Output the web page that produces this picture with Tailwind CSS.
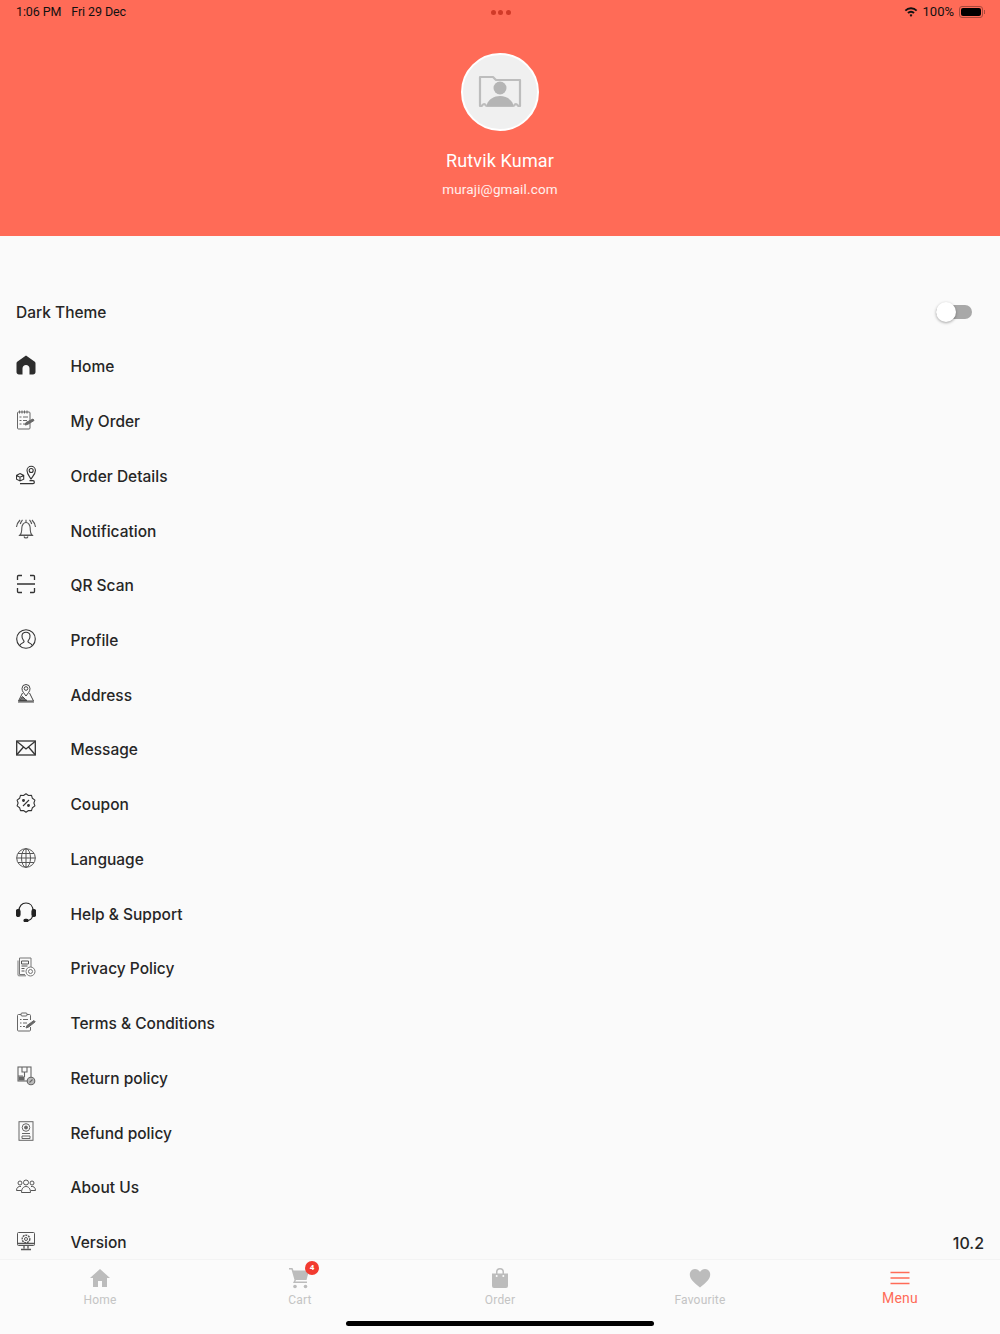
<!DOCTYPE html>
<html lang="en">
<head>
    <meta charset="UTF-8">
    <title>Menu</title>
    <script src="https://cdn.jsdelivr.net/npm/@tailwindcss/browser@4"></script>
</head>
<body class="bg-[#fafafa] font-['Inter',sans-serif] text-[#262626]">
<div class="w-[1000px] h-[1334px] flex flex-col overflow-hidden">

    <!-- Header -->
    <header class="h-[236px] shrink-0 bg-[#ff6b57] flex flex-col items-center">
        <div class="w-full h-6 shrink-0 grid grid-cols-3 items-center pl-4 pr-[15px] text-[12.5px] text-[#111] font-['Roboto',sans-serif]">
            <div class="flex gap-[10px] tracking-[-0.1px]"><span>1:06 PM</span><span>Fri 29 Dec</span></div>
            <div class="flex justify-center gap-[2.5px]">
                <span class="w-[5px] h-[5px] rounded-full bg-[#d03a28]"></span>
                <span class="w-[5px] h-[5px] rounded-full bg-[#d03a28]"></span>
                <span class="w-[5px] h-[5px] rounded-full bg-[#d03a28]"></span>
            </div>
            <div class="flex justify-end items-center gap-[5px] text-[13px]">
                <svg width="14" height="12" viewBox="0 0 14 11"><path d="M7 7.700a1.800 1.800 0 0 1 1.400.7L7 10.600 5.600 8.400A1.800 1.800 0 0 1 7 7.700zM7 4.300a5.200 5.200 0 0 1 3.700 1.500L9.300 7.300a3.300 3.300 0 0 0-4.600 0L3.300 5.800A5.200 5.200 0 0 1 7 4.300zM7 .8a8.700 8.700 0 0 1 6.300 2.600l-1.300 1.400a6.900 6.900 0 0 0-10 0L.7 3.400A8.700 8.700 0 0 1 7 .8z" fill="#111"/></svg>
                <span>100%</span>
                <span class="flex items-center">
                    <span class="w-[24px] h-[12px] rounded-[3px] border border-[#a8483b] p-[1px]"><span class="block w-full h-full rounded-[2px] bg-black"></span></span>
                    <span class="w-[1px] h-[4px] bg-[#a8483b] ml-[1px]"></span>
                </span>
            </div>
        </div>
        <div class="w-[78px] h-[78px] mt-[29px] rounded-full bg-[#f0f0f0] border-2 border-white flex items-center justify-center">
            <svg width="44" height="34" viewBox="0 0 44 34" fill="none">
                <path d="M2 2h13l3 3h24v26h-1.500c-1 0-1-2-2.500-2s-1.500 2-3 2H9c-1.500 0-1.500-2-3-2s-1.500 2-2.500 2H2z" stroke="#bdbdbd" stroke-width="2.200" stroke-linejoin="round"/>
                <circle cx="22" cy="13" r="6.500" fill="#b5b5b5"/>
                <path d="M9 29c2-5 7-8 13-8s11 3 13 8v2H9z" fill="#b5b5b5"/>
            </svg>
        </div>
        <p class="mt-[18px] text-[18px] leading-[24px] text-white font-['Roboto',sans-serif] tracking-[0.15px]">Rutvik Kumar</p>
        <p class="mt-[6px] text-[13.5px] leading-[20px] text-white/90 font-['Roboto',sans-serif] tracking-[0.15px]">muraji@gmail.com</p>
    </header>

    <!-- Menu list -->
    <main class="flex-1 min-h-0 overflow-hidden pt-[49px] px-4 text-[15.5px] font-medium">
        <div class="h-[54.72px] flex items-center justify-between">
            <span>Dark Theme</span>
            <span class="relative w-[36px] h-[14px] mr-[12px] rounded-full bg-[#a8a8a8]">
                <span class="absolute left-0 top-[-3px] w-[20px] h-[20px] rounded-full bg-white shadow-[0_1px_3px_rgba(0,0,0,0.35)]"></span>
            </span>
        </div>

        <div class="h-[54.72px] flex items-center">
            <svg class="w-5 h-5 mr-[34.5px] mb-1 shrink-0" viewBox="0 0 20 20"><path d="M10 .5l8.800 6.300c.6.5.7 1 .7 1.700V17c0 1.500-1 2.500-2.500 2.500h-3.500V13.500c0-2-1.500-3.500-3.500-3.500s-3.500 1.500-3.500 3.500v6H3c-1.500 0-2.500-1-2.500-2.500V8.500c0-.7.1-1.200.7-1.700z" fill="#2d2d2d"/></svg>
            <span>Home</span>
        </div>
        <div class="h-[54.72px] flex items-center">
            <svg class="w-5 h-5 mr-[34.5px] mb-1 shrink-0" viewBox="0 0 20 20" fill="none" stroke="#666" stroke-width="1"><rect x="1.500" y="2" width="12.500" height="17" rx="1"/><path d="M3.500.5v3M6 .5v3M8.500.5v3M11 .5v3M3.500 7h2M7 7h5M3.500 10.500h2M7 10.500h4M3.500 14h2M7 14h2"/><path d="M9 15l1-2.500 7-3.500 1 1.500-6.500 4z" fill="#666"/></svg>
            <span>My Order</span>
        </div>
        <div class="h-[54.72px] flex items-center">
            <svg class="w-5 h-5 mr-[34.5px] mb-1 shrink-0" viewBox="0 0 20 20" fill="none" stroke="#333" stroke-width="1.100"><path d="M15 14c-2-3-4-5-4-8.500a4.200 4.200 0 0 1 8.400 0c0 3.500-2.400 5.500-4.400 8.500z"/><circle cx="15.200" cy="5.500" r="2"/><path d="M4 8.500l3.700 1.900v3.800L4 16 .5 14.200v-3.800zM.5 10.400L4 12.200l3.700-1.800M4 12.200V16"/><path d="M4 18.700h13c1.700 0 1.700-3 0-3h-3.500" stroke-width="1.300"/></svg>
            <span>Order Details</span>
        </div>
        <div class="h-[54.72px] flex items-center">
            <svg class="w-5 h-5 mr-[34.5px] mb-1 shrink-0" viewBox="0 0 20 20" fill="none" stroke="#555" stroke-width="1.100"><path d="M4 16c1.500-1.500 1.800-3.500 1.800-7 0-3 2-5.500 4.200-5.500s4.200 2.500 4.200 5.500c0 3.500.3 5.500 1.800 7z"/><path d="M2.800 16.500h14.400M8 17.500c.5 2 3.500 2 4 0M10 .8v2.700"/><path d="M4 1C2 3 1 5 .5 8M6.500.8C5.500 2 4.800 3 4.300 5M16 1c2 2 3 4 3.500 7M13.500.8c1 1.200 1.700 2.200 2.200 4.200"/></svg>
            <span>Notification</span>
        </div>
        <div class="h-[54.72px] flex items-center">
            <svg class="w-5 h-5 mr-[34.5px] mb-1 shrink-0" viewBox="0 0 20 20" fill="none" stroke="#333" stroke-width="1.300"><path d="M1.500 6V2.500c0-.6.4-1 1-1H6M14 1.500h3.500c.6 0 1 .4 1 1V6M1.500 14v3.500c0 .6.4 1 1 1H6M14 18.500h3.500c.6 0 1-.4 1-1V14M1 10h18"/></svg>
            <span>QR Scan</span>
        </div>
        <div class="h-[54.72px] flex items-center">
            <svg class="w-5 h-5 mr-[34.5px] mb-1 shrink-0" viewBox="0 0 20 20" fill="none" stroke="#333" stroke-width="1.100"><circle cx="10" cy="10" r="9.300"/><path d="M3.800 16.500c.5-2 3.700-2.500 4.200-3.700.2-.5 0-1-.5-1.500C6.300 10 5.800 8.300 6 6.500 6.300 4.300 8 3.200 10 3.200s3.700 1.100 4 3.300c.2 1.800-.3 3.500-1.500 4.800-.5.500-.7 1-.5 1.500.5 1.200 3.700 1.700 4.200 3.700"/></svg>
            <span>Profile</span>
        </div>
        <div class="h-[54.72px] flex items-center">
            <svg class="w-5 h-5 mr-[34.5px] mb-1 shrink-0" viewBox="0 0 20 20" fill="none" stroke="#444" stroke-width="1"><path d="M10 13C8 10 6 8.500 6 5.500a4 4 0 0 1 8 0C14 8.500 12 10 10 13z"/><circle cx="10" cy="5.500" r="1.800"/><path d="M6.500 10L2.500 18h15l-4-8M2 19h16"/><path d="M3.500 17.500l3-4 3 3 1.500 1z" fill="#777"/></svg>
            <span>Address</span>
        </div>
        <div class="h-[54.72px] flex items-center">
            <svg class="w-5 h-5 mr-[34.5px] mb-1 shrink-0" viewBox="0 0 20 20" fill="none" stroke="#333" stroke-width="1.300"><rect x=".7" y="3" width="18.600" height="14"/><path d="M1 3.500l9 7.500 9-7.500M1 16.500l6.500-7.500M19 16.500L12.500 9"/></svg>
            <span>Message</span>
        </div>
        <div class="h-[54.72px] flex items-center">
            <svg class="w-5 h-5 mr-[34.5px] mb-1 shrink-0" viewBox="0 0 20 20" fill="none" stroke="#333" stroke-width="1.100"><path d="M10 .8l2.500 1.700 3-.1.9 2.900 2.500 1.800-1 2.900 1 2.900-2.500 1.800-.9 2.900-3-.1L10 19.200l-2.500-1.700-3 .1-.9-2.900-2.500-1.800 1-2.900-1-2.900 2.500-1.800.9-2.900 3 .1z" stroke-linejoin="round"/><path d="M13 7l-6 6"/><circle cx="7.500" cy="7.500" r=".9" fill="#333"/><circle cx="12.500" cy="12.500" r=".9" fill="#333"/></svg>
            <span>Coupon</span>
        </div>
        <div class="h-[54.72px] flex items-center">
            <svg class="w-5 h-5 mr-[34.5px] mb-1 shrink-0" viewBox="0 0 20 20" fill="none" stroke="#555" stroke-width="1"><circle cx="10" cy="10" r="9.300"/><ellipse cx="10" cy="10" rx="4.500" ry="9.300"/><path d="M10 .7v18.600M.7 10h18.600M2 5.500h16M2 14.500h16"/></svg>
            <span>Language</span>
        </div>
        <div class="h-[54.72px] flex items-center">
            <svg class="w-5 h-5 mr-[34.5px] mb-1 shrink-0" viewBox="0 0 20 20" fill="none" stroke="#222" stroke-width="1.200"><path d="M3 9c0-5 3-8 7-8s7 3 7 8M16.500 14c-.5 3-3 4.500-6 4.500"/><rect x=".5" y="7.500" width="3.500" height="7" rx="1.700" fill="#222"/><rect x="16" y="7.500" width="3.500" height="7" rx="1.700" fill="#222"/><rect x="8" y="17.300" width="4" height="2.400" rx="1.200" fill="#222"/></svg>
            <span>Help &amp; Support</span>
        </div>
        <div class="h-[54.72px] flex items-center">
            <svg class="w-5 h-5 mr-[34.5px] mb-1 shrink-0" viewBox="0 0 20 20" fill="none" stroke="#777" stroke-width="1"><path d="M2 3.500V18c0 .5.300.8.800.8H10"/><path d="M3.500 1H15v9M3.500 1v16.500H9"/><path d="M5.500 4h7v3h-7zM5.500 9h6M5.500 11.500h3M5.500 14h3" stroke="#555"/><circle cx="14.500" cy="14.500" r="4.500"/><circle cx="14.500" cy="14.500" r="2"/></svg>
            <span>Privacy Policy</span>
        </div>
        <div class="h-[54.72px] flex items-center">
            <svg class="w-5 h-5 mr-[34.5px] mb-1 shrink-0" viewBox="0 0 20 20" fill="none" stroke="#666" stroke-width="1"><path d="M5 2.500H2.500c-.6 0-1 .4-1 1V18c0 .6.4 1 1 1h11c.6 0 1-.4 1-1v-3M11 2.500h2.500c.6 0 1 .4 1 1V8"/><rect x="5" y="1" width="6" height="3" rx="1"/><path d="M4 7.500h1.500M7 7.500h5M4 11h1.500M7 11h4M4 14.500h1.500M7 14.500h2"/><path d="M10 16l1-2.500 7-5 1.200 1.300-6.500 5.200z" fill="#666"/></svg>
            <span>Terms &amp; Conditions</span>
        </div>
        <div class="h-[54.72px] flex items-center">
            <svg class="w-5 h-5 mr-[34.5px] mb-1 shrink-0" viewBox="0 0 20 20" fill="none" stroke="#666" stroke-width="1.100"><rect x="2" y="1" width="13" height="14"/><path d="M6 1v5h5V1M2 10h5M8.500 6v5" /><path d="M3 11h5v3H3z" fill="#666"/><circle cx="15" cy="15" r="3.800" fill="#bbb"/><path d="M13.500 16.500l3-3"/></svg>
            <span>Return policy</span>
        </div>
        <div class="h-[54.72px] flex items-center">
            <svg class="w-5 h-5 mr-[34.5px] mb-1 shrink-0" viewBox="0 0 20 20" fill="none" stroke="#666" stroke-width="1"><rect x="3" y=".7" width="14" height="18.600"/><circle cx="10" cy="6.500" r="3.800"/><circle cx="10" cy="6.500" r="1.500" fill="#666"/><path d="M6 12.500h8M6 15h8v2.500H6z"/></svg>
            <span>Refund policy</span>
        </div>
        <div class="h-[54.72px] flex items-center">
            <svg class="w-5 h-5 mr-[34.5px] mb-1 shrink-0" viewBox="0 0 20 20" fill="none" stroke="#555" stroke-width="1"><circle cx="10" cy="6.500" r="2.500"/><circle cx="4" cy="7" r="2"/><circle cx="16" cy="7" r="2"/><path d="M5.500 16.500c0-4 2-6 4.500-6s4.500 2 4.500 6zM5 10.500C2.500 10 .5 11.500.5 14.500h4.500M15 10.500c2.500-.5 4.500 1 4.500 4H15"/></svg>
            <span>About Us</span>
        </div>
        <div class="h-[54.72px] flex items-center">
            <svg class="w-5 h-5 mr-[34.5px] mb-1 shrink-0" viewBox="0 0 20 20" fill="none" stroke="#555" stroke-width="1"><rect x="1.500" y="1.500" width="17" height="13" rx="1"/><circle cx="10" cy="8" r="3.800" stroke-dasharray="2 .8" stroke-width="1.400"/><circle cx="10" cy="8" r="1.500"/><path d="M1.500 12.500h17M8 14.500v3M12 14.500v3M5 18.500h10" stroke-width="1.300"/></svg>
            <span>Version</span>
            <span class="ml-auto text-[16px]">10.2</span>
        </div>
    </main>

    <!-- Bottom tabs -->
    <nav class="h-[75px] shrink-0 border-t border-[#f3f3f3] bg-[#fbfbfb] flex flex-col items-center">
        <div class="w-full h-[61px] shrink-0 grid grid-cols-5 text-[12px] text-[#c4c4c4] font-['Roboto',sans-serif] tracking-[0.2px]">
            <div class="flex flex-col items-center pt-[7px]">
                <svg class="w-[22px] h-[22px]" viewBox="0 0 22 22"><path d="M11 2L1 11h3v9h5v-6h4v6h5v-9h3z" fill="#bcbcbc"/></svg>
                <span class="mt-[2px] leading-[18px]">Home</span>
            </div>
            <div class="flex flex-col items-center pt-[7px]">
                <span class="relative w-[22px] h-[22px]">
                    <svg class="w-[22px] h-[22px]" viewBox="0 0 22 22"><path d="M0 1h3.500l1 2.500H20l-2.500 9.500H7l-.7 1.500H18v1.500H4L5.500 13 2.500 2.500H0z" fill="#bcbcbc"/><circle cx="6" cy="19.500" r="1.800" fill="#bcbcbc"/><circle cx="16.500" cy="19.500" r="1.800" fill="#bcbcbc"/></svg>
                    <span class="absolute left-[16px] top-[-6px] w-[14px] h-[14px] rounded-full bg-[#f23b30] text-white text-[8px] font-bold flex items-center justify-center tracking-normal">4</span>
                </span>
                <span class="mt-[2px] leading-[18px]">Cart</span>
            </div>
            <div class="flex flex-col items-center pt-[7px]">
                <svg class="w-[22px] h-[22px]" viewBox="0 0 22 22"><path d="M3 6.500h4V5a4 4 0 0 1 8 0v1.500h4V19a2 2 0 0 1-2 2H5a2 2 0 0 1-2-2zM8.500 6.500h5V5a2.500 2.500 0 0 0-5 0z" fill="#bcbcbc" fill-rule="evenodd"/><circle cx="7.700" cy="9" r="1" fill="#fbfbfb"/><circle cx="14.300" cy="9" r="1" fill="#fbfbfb"/></svg>
                <span class="mt-[2px] leading-[18px]">Order</span>
            </div>
            <div class="flex flex-col items-center pt-[7px]">
                <svg class="w-[22px] h-[22px]" viewBox="0 0 22 22"><path d="M11 20.500C4 15 .8 11.500.8 7.500.8 4.300 3.200 2 6 2c2 0 3.800 1 5 3 1.200-2 3-3 5-3 2.800 0 5.200 2.300 5.200 5.500 0 4-3.200 7.500-10.200 13z" fill="#bcbcbc"/></svg>
                <span class="mt-[2px] leading-[18px]">Favourite</span>
            </div>
            <div class="flex flex-col items-center pt-[7px] text-[#ff6b57]">
                <svg class="w-[22px] h-[22px]" viewBox="0 0 22 22" stroke="#ff6b57" stroke-width="1.600"><path d="M1.500 5.500h19M1.500 11h19M1.500 16.500h19"/></svg>
                <span class="text-[14px] leading-[18px]">Menu</span>
            </div>
        </div>
        <div class="w-[308px] h-[5px] rounded-full bg-black"></div>
    </nav>
</div>
</body>
</html>
